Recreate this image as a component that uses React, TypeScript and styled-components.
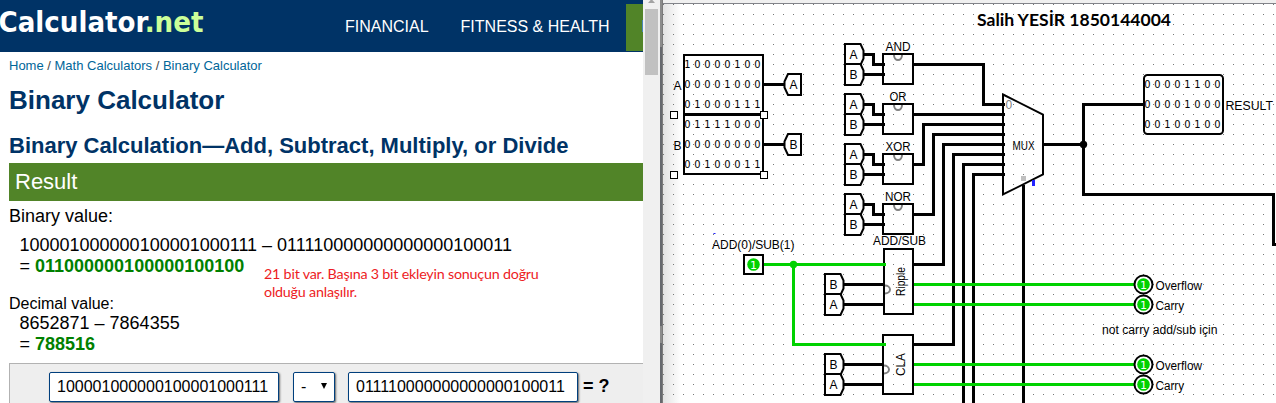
import React from 'react';
import styled, { createGlobalStyle } from 'styled-components';

const GlobalStyle = createGlobalStyle`
  * { box-sizing: border-box; }
  body { margin: 0; overflow: hidden; background: #fff; }
`;

const Screen = styled.div`
  display: flex;
  width: 1276px;
  height: 403px;
  overflow: hidden;
  font-family: 'Liberation Sans', Arial, sans-serif;
  color: #000;
`;

/* ---------- calculator page ---------- */

const Page = styled.div`
  width: 643px;
  height: 403px;
  flex: none;
  overflow: hidden;
  background: #fff;
`;

const Header = styled.header`
  display: flex;
  height: 52px;
  background: #003366;
`;

const Logo = styled.svg`
  display: block;
  flex: none;
  width: 210px;
  height: 52px;
`;

const Nav = styled.nav`
  display: flex;
  flex: 1;
  padding-left: 135px;
  gap: 32px;
  font-size: 16px;
  line-height: 53px;
  color: #fff;
  white-space: nowrap;
`;

const ActiveTab = styled.div`
  width: 17px;
  height: 47px;
  margin-top: 4px;
  flex: none;
  background: #518428;
  display: flex;
  align-items: center;
  justify-content: flex-end;
`;

const TabSliver = styled.i`
  width: 1px;
  height: 12px;
  margin-bottom: 3px;
  background: #4a86b8;
`;

const Content = styled.main`
  padding-left: 9px;
`;

const Breadcrumb = styled.div`
  padding-top: 6px;
  font-size: 13px;
  line-height: 15px;
  color: #444;
  a { color: #069; }
`;

const Title = styled.h1`
  margin: 12px 0 18px;
  font-size: 26px;
  line-height: 30px;
  color: #003366;
`;

const Subtitle = styled.h2`
  margin: 0 0 4px;
  font-size: 22px;
  line-height: 26px;
  color: #003366;
  white-space: nowrap;
`;

const ResultBar = styled.div`
  height: 38px;
  padding-left: 6px;
  background: #518428;
  color: #fff;
  font-size: 22px;
  line-height: 37px;
`;

const Label = styled.div<{ $size: number; $top: number }>`
  margin-top: ${(p) => p.$top}px;
  font-size: ${(p) => p.$size}px;
  line-height: 22px;
`;

const Calculation = styled.div<{ $top: number }>`
  height: 41px;
  margin-top: ${(p) => p.$top}px;
  padding-left: 10.5px;
  font-size: 18px;
  line-height: 20.5px;
  white-space: nowrap;
  b { color: #008000; }
`;

const Note = styled.p`
  position: absolute;
  left: 264px;
  top: 265px;
  margin: 0;
  font-family: Lato, sans-serif;
  font-size: 14.3px;
  letter-spacing: -0.21px;
  line-height: 18px;
  color: #ed1c24;
  white-space: nowrap;
`;

const Form = styled.div`
  display: flex;
  align-items: flex-start;
  height: 50px;
  margin-top: 9px;
  padding: 8px 0 0 39px;
  background: #eee;
  border: 1px solid #b2b2b2;
  border-right: 0;
`;

const Field = styled.div<{ $width: number; $gap: number }>`
  display: flex;
  justify-content: space-between;
  width: ${(p) => p.$width}px;
  height: 30px;
  margin-right: ${(p) => p.$gap}px;
  padding: 0 7px;
  background: #fff;
  border: 1px solid #003f7d;
  border-radius: 2px;
  box-shadow: 1px 1px 2px #666;
  font-size: 16px;
  line-height: 27px;
`;

const Caret = styled.svg`
  width: 8px;
  height: 28px;
  margin-right: -1px;
`;

const Equals = styled.b`
  font-size: 18px;
  line-height: 28px;
`;

/* ---------- scrollbar and window edge ---------- */

const Scrollbar = styled.div`
  width: 17px;
  height: 403px;
  flex: none;
  background: #f0f0f0;
  padding-left: 2px;
`;

const Arrow = styled.svg`
  display: block;
  width: 13px;
  height: 9px;
`;

const Thumb = styled.div`
  width: 13px;
  height: 66px;
  background: #c1c1c1;
`;

const Edge = styled.div`
  width: 3px;
  height: 403px;
  flex: none;
  background: linear-gradient(to bottom, #8b8b8b 0 47px, #66686d 47px 326px, #8b8b8b 326px 343px, #66686d 343px);
  border-right: 1px solid #7b7b7b;
`;

/* ---------- circuit ---------- */

const Canvas = styled.svg`
  display: block;
  width: 613px;
  height: 403px;
  flex: none;
  font-family: 'Liberation Sans', Arial, sans-serif;
  font-size: 12px;
`;

const BLACK = '#000';
const GREEN = '#00d200';

const Wire = ({ d, color = BLACK }: { d: string; color?: string }) => (
  <path d={d} fill="none" stroke={color} strokeWidth={3} shapeRendering="crispEdges" />
);

type TextProps = { x: number; y: number; w: number; children: string };

const Caption = ({ x, y, w, children }: TextProps) => (
  <text x={x} y={y} textLength={w} lengthAdjust="spacingAndGlyphs">
    {children}
  </text>
);

/* Tunnel whose point faces right; y is the height of the point. */
const Tunnel = ({ x, y, name }: { x: number; y: number; name: string }) => (
  <g>
    <path
      d={`M${x} ${y - 10.5}H${x + 15.5}L${x + 18.5} ${y - 4}V${y + 4}L${x + 15.5} ${y + 10.5}H${x}Z`}
      fill="#fff"
      stroke={BLACK}
      strokeWidth={2}
    />
    <text x={x + 8.5} y={y + 4.5} textAnchor="middle">{name}</text>
  </g>
);

const TunnelLeft = ({ y, name }: { y: number; name: string }) => (
  <g>
    <path
      d={`M800.5 ${y - 10.5}H787.5L784 ${y - 3}V${y + 3}L787.5 ${y + 10.5}H800.5Z`}
      fill="#fff"
      stroke={BLACK}
      strokeWidth={2}
    />
    <text x={793} y={y + 4.5} textAnchor="middle">{name}</text>
  </g>
);

const Gate = ({ y, name, w }: { y: number; name: string; w: number }) => (
  <g>
    <Wire d={`M863 ${y}H873V${y + 10}H884M863 ${y + 20}H884`} />
    <Tunnel x={844.5} y={y} name="A" />
    <Tunnel x={844.5} y={y + 20} name="B" />
    <rect x={882.5} y={y - 0.5} width={30} height={30} fill="none" stroke={BLACK} strokeWidth={2} />
    <path d={`M893.5 ${y + 0.5}a4 5 0 0 0 8 0`} fill="none" stroke="#808080" strokeWidth={2} />
    <Caption x={897.5 - w / 2} y={y - 3.5} w={w}>{name}</Caption>
  </g>
);

type AdderProps = { x: number; top: number; h: number; y: number; name: string; w: number };

const Adder = ({ x, top, h, y, name, w }: AdderProps) => (
  <g>
    <Wire d={`M843 ${y}H${x + 1}M843 ${y + 20}H${x + 1}`} />
    <Tunnel x={824.5} y={y} name="B" />
    <Tunnel x={824.5} y={y + 20} name="A" />
    <rect x={x} y={top} width={912.5 - x} height={h} fill="none" stroke={BLACK} strokeWidth={2} />
    <path d={`M${x + 1} ${y + 1}a5 4 0 0 1 0 8`} fill="none" stroke="#808080" strokeWidth={2} />
    <text
      transform={`translate(904.5 ${top + h / 2 + w / 2}) rotate(-90)`}
      textLength={w}
      lengthAdjust="spacingAndGlyphs"
    >
      {name}
    </text>
  </g>
);

const Bits = ({ x, y, rows }: { x: number; y: number; rows: string[] }) => (
  <g fontFamily="'DejaVu Sans Condensed', 'DejaVu Sans', sans-serif" fontSize={11} textAnchor="middle">
    {rows.map((row, r) =>
      row.split('').map((bit, i) => (
        <text key={`${r}-${i}`} x={x + i * 10} y={y + r * 20}>{bit}</text>
      )),
    )}
  </g>
);

const Bulb = ({ x, y }: { x: number; y: number }) => (
  <g>
    <circle cx={x} cy={y} r={6.3} fill={GREEN} />
    <text x={x} y={y + 4} fontSize={11} fontFamily="'DejaVu Sans', sans-serif" fill="#fff" textAnchor="middle">1</text>
  </g>
);

const Output = ({ y, name, w }: { y: number; name: string; w: number }) => (
  <g>
    <Wire d={`M912 ${y}H1135`} color={GREEN} />
    <circle cx={1143} cy={y} r={9} fill="#fff" stroke={BLACK} strokeWidth={2} />
    <Bulb x={1143} y={y} />
    <Caption x={1155} y={y + 5} w={w}>{name}</Caption>
  </g>
);

const HANDLES = [[673, 114], [763, 114], [673, 174], [763, 174]];

const Circuit = () => (
  <Canvas viewBox="663 0 613 403">
    <defs>
      <pattern id="grid" x="663" y="4" width="10" height="10" patternUnits="userSpaceOnUse">
        <rect width="1" height="1" fill="#777" />
      </pattern>
      <linearGradient id="shade">
        <stop offset="0" stopColor="#e2e2e2" />
        <stop offset="1" stopColor="#fff" />
      </linearGradient>
    </defs>
    <rect x="663" width="613" height="403" fill="#fff" />
    <rect x="663" width="18" height="403" fill="url(#shade)" />
    <rect x="663" y="4" width="613" height="399" fill="url(#grid)" />
    <rect x="663" width="613" height="3" fill="#f0f0f0" />
    <rect x="663" y="3" width="613" height="1" fill="#82848a" />

    <g transform="translate(.5 .5)">
      <text x="976.5" y="25" fontFamily="Lato, sans-serif" fontWeight="700" fontSize="17.5" textLength="194" lengthAdjust="spacingAndGlyphs">
        Salih YESİR 1850144004
      </text>

      <Wire d="M763 84H784M763 144H784" />
      <TunnelLeft y={84} name="A" />
      <TunnelLeft y={144} name="B" />
      <rect x="683.5" y="54.5" width="79" height="119" fill="none" stroke={BLACK} strokeWidth={2} />
      <Wire d="M683 114H763" />
      <Bits x={687} y={67.5} rows={['10000100', '00001000', '01000111', '01111000', '00000000', '00100011']} />
      <text x="673" y="89.5">A</text>
      <text x="673" y="149.5">B</text>
      {HANDLES.map(([x, y]) => (
        <rect key={`${x}-${y}`} x={x - 3} y={y - 3} width={7} height={7} fill="#fff" stroke={BLACK} />
      ))}

      <Wire d="M912 64H983V104H1004M912 114H1004M912 164H923V124H1004M912 214H933V134H1004" />
      <Wire d="M912 264H943V144H1004M912 344H953V154H1004M963 403V164H1004M973 403V174H1004M1023 403V184" />
      <Gate y={54} name="AND" w={25} />
      <Gate y={104} name="OR" w={17} />
      <Gate y={154} name="XOR" w={25} />
      <Gate y={204} name="NOR" w={26} />

      <Wire d="M1043 144H1083M1143 104H1083V194H1273V244H1277" />
      <circle cx="1083" cy="144" r="3.7" />
      <path d="M1002.5 94L1042.5 114V174L1002.5 194Z" fill="none" stroke={BLACK} strokeWidth={2} />
      <text x="1005" y="108.5" fill="#808080">0</text>
      <Caption x={1012} y={149.5} w={22}>MUX</Caption>
      <rect x="1020.5" y="175.5" width="5" height="5" fill="#c0c0c0" />
      <rect x="1031.5" y="179.5" width="3" height="6" fill="#2323ff" />

      <rect x="1143.5" y="74.5" width="79" height="59" rx="3.5" fill="none" stroke={BLACK} strokeWidth={2} />
      <Bits x={1147} y={87.5} rows={['00001100', '00001000', '00100100']} />
      <Caption x={1225} y={109} w={47.5}>RESULT</Caption>

      <Output y={284} name="Overflow" w={46.5} />
      <Output y={304} name="Carry" w={28.5} />
      <Output y={364} name="Overflow" w={46.5} />
      <Output y={384} name="Carry" w={28.5} />
      <Caption x={1101.5} y={333} w={115.5}>not carry add/sub için</Caption>

      <rect x="713" y="232.5" width="2" height="1" fill="#2323ff" />
      <Caption x={711.5} y={248} w={82.5}>ADD(0)/SUB(1)</Caption>
      <rect x="743.5" y="254.5" width="19" height="19" fill="none" stroke={BLACK} strokeWidth={2} />
      <Bulb x={753} y={264} />
      <Adder x={883.5} top={248.5} h={65} y={284} name="Ripple" w={29} />
      <Adder x={882.5} top={334.5} h={59} y={364} name="CLA" w={23} />
      <Caption x={872.5} y={244.5} w={53}>ADD/SUB</Caption>
      <Wire d="M763 264H885M793 264V344H885" color={GREEN} />
      <circle cx="793" cy="264" r="3.7" fill={GREEN} />
    </g>
  </Canvas>
);

export default function App() {
  return (
    <Screen>
      <GlobalStyle />
      <Page>
        <Header>
          <Logo viewBox="0 0 210 52" fontFamily="'DejaVu Sans', sans-serif" fontWeight="bold" fontSize="28.5">
            <text x="-1.5" y="31.5" fill="#fff" textLength="205" lengthAdjust="spacingAndGlyphs">
              Calculator<tspan fill="#cf9">.net</tspan>
            </text>
          </Logo>
          <Nav>
            <span>FINANCIAL</span>
            <span>FITNESS &amp; HEALTH</span>
          </Nav>
          <ActiveTab><TabSliver /></ActiveTab>
        </Header>
        <Content>
          <Breadcrumb><a>Home</a> / <a>Math Calculators</a> / <a>Binary Calculator</a></Breadcrumb>
          <Title>Binary Calculator</Title>
          <Subtitle>Binary Calculation—Add, Subtract, Multiply, or Divide</Subtitle>
          <ResultBar>Result</ResultBar>
          <Label $size={18} $top={4}>Binary value:</Label>
          <Calculation $top={8}>
            100001000000100001000111 – 011110000000000000100011<br />= <b>011000000100000100100</b>
          </Calculation>
          <Label $size={16} $top={17}>Decimal value:</Label>
          <Calculation $top={-2}>
            8652871 – 7864355<br />= <b>788516</b>
          </Calculation>
          <Form>
            <Field $width={230} $gap={14}>100001000000100001000111</Field>
            <Field $width={42} $gap={13}>
              -
              <Caret viewBox="0 0 8 28"><path d="M1 10H7L4 16Z" /></Caret>
            </Field>
            <Field $width={230} $gap={5}>011110000000000000100011</Field>
            <Equals>= ?</Equals>
          </Form>
        </Content>
        <Note>21 bit var. Başına 3 bit ekleyin sonuçun doğru<br />olduğu anlaşılır.</Note>
      </Page>
      <Scrollbar>
        <Arrow viewBox="0 0 13 9"><path d="M3 3L6.5 -1L10 3Z" fill="#a3a3a3" /></Arrow>
        <Thumb />
      </Scrollbar>
      <Edge />
      <Circuit />
    </Screen>
  );
}
